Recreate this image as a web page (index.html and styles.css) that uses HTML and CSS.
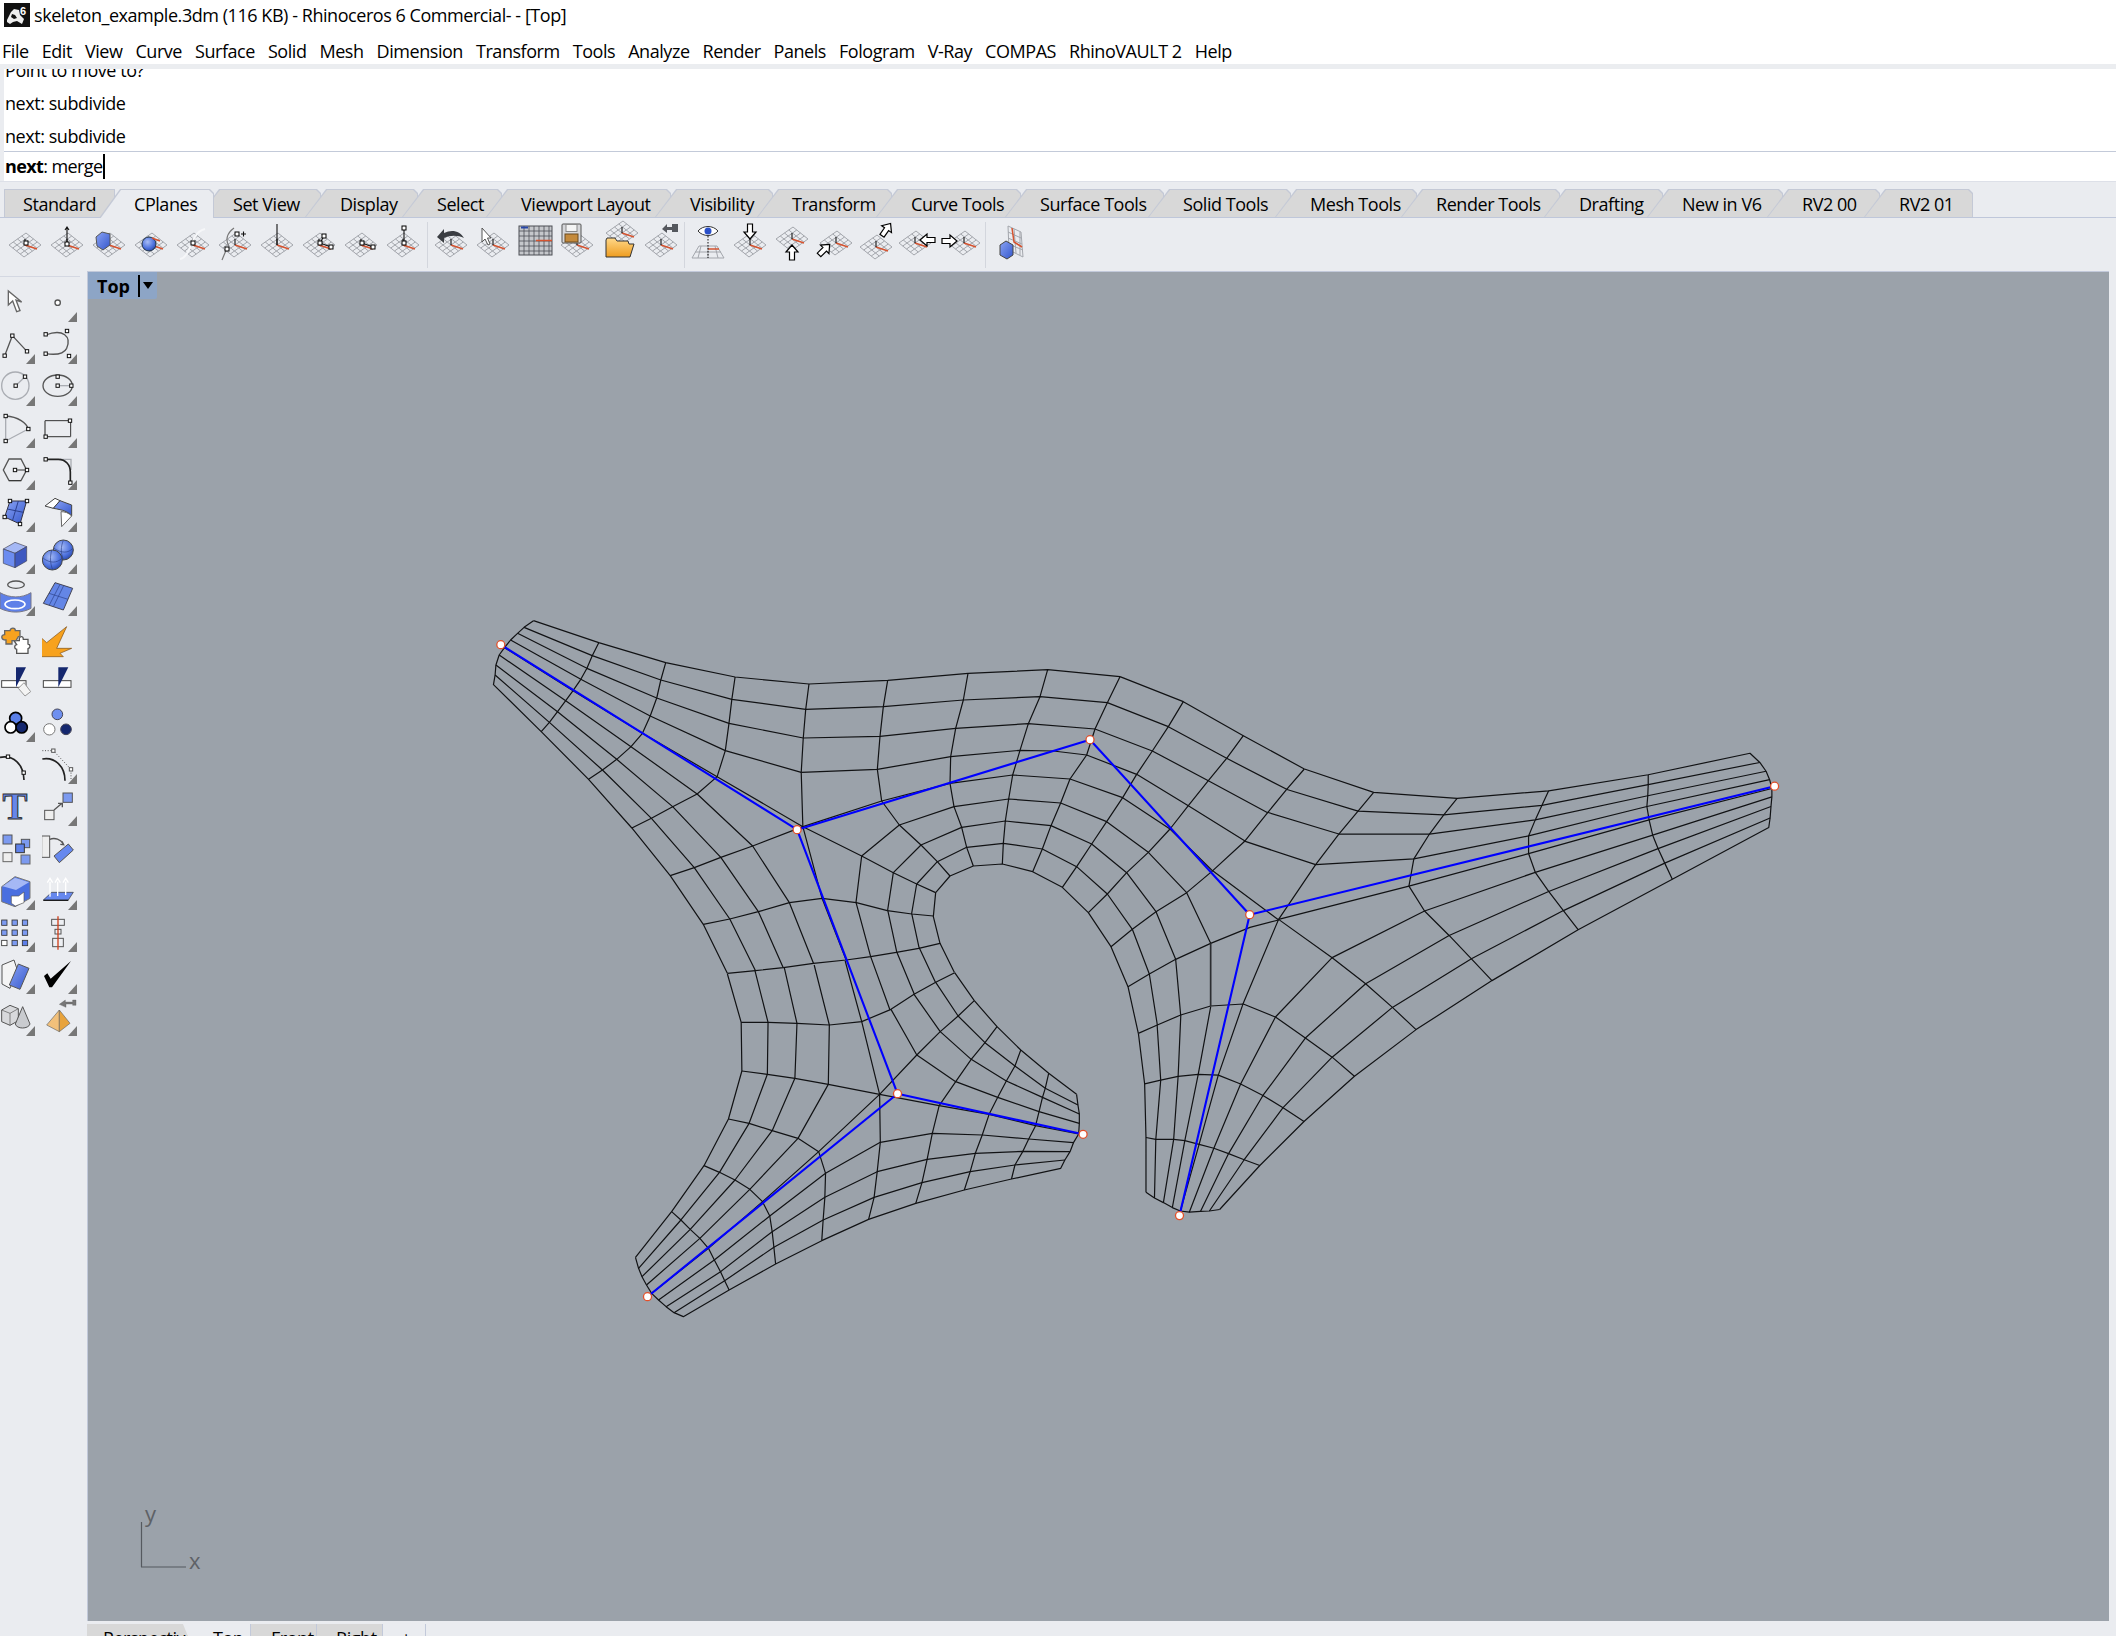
FILE: index.html
```html
<!DOCTYPE html>
<html lang="en">
<head>
<meta charset="utf-8">
<title>Rhinoceros 6</title>
<link rel="stylesheet" href="styles.css">
</head>
<body>
<svg class="defs" aria-hidden="true">
  <defs>
    <symbol id="cg" viewBox="0 0 32 26" overflow="visible">
      <path class="gl" d="M0 13 15 25M4.25 10 19.25 22M8.5 7 23.5 19M12.75 4 27.75 16M17 1 32 13M0 13 17 1M3.75 16 20.75 4M7.5 19 24.5 7M11.25 22 28.25 10M15 25 32 13"/>
      <path class="red" d="M16 13 28 17"/>
      <path class="ax" d="M16 7V13"/>
    </symbol>
    <symbol id="ar" viewBox="-7 -9 14 18" overflow="visible">
      <path class="arw" d="M0-8 6-1H2.5V7H-2.500V-1H-6Z"/>
    </symbol>
    <linearGradient id="fold" x1="0" y1="0" x2="0" y2="1"><stop offset="0" stop-color="#ffd889"/><stop offset="1" stop-color="#ee9c1f"/></linearGradient>
    <linearGradient id="blu" x1="0" y1="0" x2="1" y2="1"><stop offset="0" stop-color="#8aa3f4"/><stop offset="1" stop-color="#3457cc"/></linearGradient>
    <radialGradient id="sph" cx=".4" cy=".35" r=".75"><stop offset="0" stop-color="#a9bdf5"/><stop offset=".6" stop-color="#4e72de"/><stop offset="1" stop-color="#23409c"/></radialGradient>
  </defs>
</svg>

<div class="app">
  <header class="titlebar">
    <svg class="logo" viewBox="0 0 26 24"><rect width="26" height="24" fill="#111"/><path fill="#eee" d="M3 17 7 9l3-3 5 1 1 5 4 4-2 5-5-3-4 1-3 2-3-2Z"/><path fill="#111" d="M8 11l3 1 2 3-3 1-3-2Z"/><text class="six" x="16" y="12">6</text></svg>
    <span>skeleton_example.3dm (116 KB) - Rhinoceros 6 Commercial- - [Top]</span>
  </header>
  <nav class="menubar">
    <span>File</span><span>Edit</span><span>View</span><span>Curve</span><span>Surface</span><span>Solid</span><span>Mesh</span><span>Dimension</span><span>Transform</span><span>Tools</span><span>Analyze</span><span>Render</span><span>Panels</span><span>Fologram</span><span>V-Ray</span><span>COMPAS</span><span>RhinoVAULT 2</span><span>Help</span>
  </nav>
  <section class="command">
    <div class="history">
      <div class="hline">Point to move to?</div>
      <div class="hline">next: subdivide</div>
      <div class="hline">next: subdivide</div>
    </div>
    <div class="prompt"><b>next</b>: merge<i class="caret"></i></div>
  </section>

  <div class="tabs">
    <div class="tab first"><span>Standard</span></div>
    <div class="tab active"><span>CPlanes</span></div>
    <div class="tab"><span>Set View</span></div>
    <div class="tab"><span>Display</span></div>
    <div class="tab"><span>Select</span></div>
    <div class="tab"><span>Viewport Layout</span></div>
    <div class="tab"><span>Visibility</span></div>
    <div class="tab"><span>Transform</span></div>
    <div class="tab"><span>Curve Tools</span></div>
    <div class="tab"><span>Surface Tools</span></div>
    <div class="tab"><span>Solid Tools</span></div>
    <div class="tab"><span>Mesh Tools</span></div>
    <div class="tab"><span>Render Tools</span></div>
    <div class="tab"><span>Drafting</span></div>
    <div class="tab"><span>New in V6</span></div>
    <div class="tab"><span>RV2 00</span></div>
    <div class="tab last"><span>RV2 01</span></div>
  </div>

  <div class="toolbar">
    <svg class="ti" viewBox="0 0 42 50"><use href="#cg" x="5" y="12" width="32" height="26"/><rect class="sq" x="20" y="21" width="4" height="4"/></svg>
    <svg class="ti" viewBox="0 0 42 50"><use href="#cg" x="5" y="12" width="32" height="26"/><path class="bk" d="M21 8V24M19 10l2-3 2 3"/><rect class="sq" x="19" y="22" width="4" height="4"/></svg>
    <svg class="ti" viewBox="0 0 42 50"><use href="#cg" x="5" y="12" width="32" height="26"/><path fill="url(#blu)" stroke="#555" d="M8 17 14 12 22 14V25L15 30 9 26Z"/></svg>
    <svg class="ti" viewBox="0 0 42 50"><use href="#cg" x="5" y="12" width="32" height="26"/><circle cx="19" cy="24" r="7" fill="url(#sph)" stroke="#234"/><path class="rd2" d="M22 18 30 21"/></svg>
    <svg class="ti" viewBox="0 0 42 50"><use href="#cg" x="5" y="12" width="32" height="26"/><path class="wh" d="M8 39C16 38 18 24 23 17 25 13 29 10 33 9"/><rect class="sq" x="19" y="21" width="4" height="4"/></svg>
    <svg class="ti" viewBox="0 0 42 50"><use href="#cg" x="5" y="12" width="32" height="26"/><path class="gy" d="M8 40 13 28M20 8C13 13 11 20 15 26"/><rect class="sq" x="11" y="27" width="4" height="4"/><rect class="sq" x="21" y="12" width="4" height="4"/><path class="bk" d="M27 14h5M29.500 11.500v5"/></svg>
    <svg class="ti" viewBox="0 0 42 50"><use href="#cg" x="5" y="12" width="32" height="26"/><path class="bk" d="M21 4V25"/></svg>
    <svg class="ti" viewBox="0 0 42 50"><use href="#cg" x="5" y="12" width="32" height="26"/><path class="bk" d="M22 23 26 16M22 23 33 27"/><rect class="sq" x="20" y="21" width="4" height="4"/><rect class="sq" x="24" y="14" width="4" height="4"/><rect class="sq" x="31" y="25" width="4" height="4"/></svg>
    <svg class="ti" viewBox="0 0 42 50"><use href="#cg" x="5" y="12" width="32" height="26"/><path class="bk" d="M22 23 33 27"/><rect class="sq" x="20" y="21" width="4" height="4"/><rect class="sq" x="31" y="25" width="4" height="4"/></svg>
    <svg class="ti" viewBox="0 0 42 50"><use href="#cg" x="5" y="12" width="32" height="26"/><path class="bk" d="M22 8V23"/><rect class="sq" x="20" y="6" width="4" height="4"/><rect class="sq" x="20" y="21" width="4" height="4"/></svg>
    <i class="tsep s6"></i>
    <svg class="ti" viewBox="0 0 42 50"><use href="#cg" x="5" y="12" width="32" height="26"/><path fill="#3a3d42" d="M7 17 14 9V13C22 9 30 11 34 18 28 15 20 15 14 18V23Z"/></svg>
    <svg class="ti" viewBox="0 0 42 50"><use href="#cg" x="5" y="12" width="32" height="26"/><path fill="#fff" stroke="#555" d="M10 8V22L13 19 16 25 18 24 15.500 18H19Z"/></svg>
    <svg class="ti" viewBox="0 0 42 50"><rect x="5" y="6" width="33" height="29" fill="#c5c7cb" stroke="#4c4f55"/><path class="gd" d="M10 6V35M15 6V35M20 6V35M25 6V35M30 6V35M35 6V35M5 11H38M5 16H38M5 21H38M5 26H38M5 31H38"/><path class="rd2" d="M22 20.500H38"/><path stroke="#2746a8" stroke-width="2" d="M7 7.500H14"/></svg>
    <svg class="ti" viewBox="0 0 42 50"><use href="#cg" x="5" y="12" width="32" height="26"/><rect x="6" y="4" width="19" height="19" rx="1" fill="#d6d7da" stroke="#555"/><rect x="10" y="4.500" width="11" height="7" fill="#f4f4f4" stroke="#888"/><rect x="9" y="14" width="13" height="8" fill="#c48a3c" stroke="#6b4a1f"/></svg>
    <svg class="ti" viewBox="0 0 42 50"><use href="#cg" x="8" y="0" width="32" height="26"/><path fill="url(#fold)" stroke="#333" d="M8 37V20L9 18H17L19 21H30L31 24H36L32 37Z"/></svg>
    <svg class="ti" viewBox="0 0 42 50"><use href="#cg" x="5" y="12" width="32" height="26"/><path fill="#55585e" d="M22 9 27 4V7H32V4H38V12H32V10H27V13Z"/></svg>
    <i class="tsep s5"></i>
    <svg class="ti" viewBox="0 0 42 50"><path class="gl" d="M12 26H30L37 38H5ZM8 32H34M14 26 11 38M21 26V38M28 26 31 38"/><path class="rd2" d="M21 29H32"/><path class="dot" d="M21 16V38"/><path fill="#fff" stroke="#333" d="M11 11C16 5 26 5 31 11 26 17 16 17 11 11Z"/><circle cx="21" cy="11" r="3.500" fill="#2b50c8"/></svg>
    <svg class="ti" viewBox="0 0 42 50"><use href="#cg" x="5" y="12" width="32" height="26"/><use href="#ar" width="14" height="18" transform="translate(21 11) rotate(180) translate(-7 -9)"/></svg>
    <svg class="ti" viewBox="0 0 42 50"><use href="#cg" x="5" y="6" width="32" height="26"/><use href="#ar" width="14" height="18" transform="translate(21 33) translate(-7 -9)"/></svg>
    <svg class="ti" viewBox="0 0 42 50"><use href="#cg" x="7" y="10" width="32" height="26"/><use href="#ar" width="14" height="18" transform="translate(11 30) rotate(45) translate(-7 -9)"/></svg>
    <svg class="ti" viewBox="0 0 42 50"><use href="#cg" x="5" y="14" width="32" height="26"/><use href="#ar" width="14" height="18" transform="translate(31 10) rotate(35) translate(-7 -9)"/></svg>
    <svg class="ti" viewBox="0 0 42 50"><use href="#cg" x="2" y="10" width="32" height="26"/><use href="#ar" width="14" height="18" transform="translate(31 20) rotate(-90) translate(-7 -9)"/></svg>
    <svg class="ti" viewBox="0 0 42 50"><use href="#cg" x="9" y="10" width="32" height="26"/><use href="#ar" width="14" height="18" transform="translate(10 21) rotate(90) translate(-7 -9)"/></svg>
    <i class="tsep s9"></i>
    <svg class="ti" viewBox="0 0 42 50"><path class="gl" d="M18 6 31 12 33 37 19 30ZM24 9 26 33M30 12V35M18 12 31 18M18 18 32 24M18 24 33 30"/><path class="rd2" d="M22 8 24 22 32 27"/><path fill="url(#blu)" stroke="#444" d="M10 25 16 21 23 25 23 35 17 39 10 35Z"/></svg>
  </div>

  <div class="workspace">
    <aside class="lefttools">
      <div class="grip"></div>
      <div class="lgrid">
        <div class="lc"><svg viewBox="0 33 126 126"><path fill="#fff" stroke="#666" stroke-width="4" d="M25 63V105L38 93 50 125 60 122 48 90 65 96Z"/></svg></div>
        <div class="lc fly"><svg viewBox="126 33 126 126"><circle cx="173" cy="98" r="8" fill="#fff" stroke="#555" stroke-width="4"/></svg></div>

        <div class="lc fly"><svg viewBox="0 159 126 126"><path class="li" d="M14 257 37 197 81 244"/><rect class="s3" x="9" y="252" width="10" height="10"/><rect class="s3" x="32" y="192" width="10" height="10"/><rect class="s3" x="76" y="239" width="10" height="10"/></svg></div>
        <div class="lc fly"><svg viewBox="126 159 126 126"><path class="li" d="M137 195C190 175 215 200 200 235 190 255 165 255 137 251"/><rect class="s3" x="132" y="188" width="10" height="10"/><rect class="s3" x="196" y="178" width="10" height="10"/><rect class="s3" x="132" y="246" width="10" height="10"/><rect class="s3" x="202" y="253" width="10" height="10"/></svg></div>

        <div class="lc fly"><svg viewBox="0 285 126 126"><circle class="li2" cx="46" cy="347" r="41"/><path class="li2" d="M47 347 75 320"/><rect class="s3" x="42" y="342" width="10" height="10"/><rect class="s3" x="70" y="315" width="10" height="10"/></svg></div>
        <div class="lc fly"><svg viewBox="126 285 126 126"><ellipse class="li" cx="173" cy="347" rx="44" ry="32"/><path class="li2" d="M173 347H214"/><rect class="s3" x="168" y="315" width="10" height="10"/><rect class="s3" x="168" y="342" width="10" height="10"/><rect class="s3" x="209" y="342" width="10" height="10"/></svg></div>

        <div class="lc fly"><svg viewBox="0 411 126 126"><path class="li2" d="M17 438V513L85 477"/><path class="li" d="M17 438C55 440 80 460 85 477"/><rect class="s3" x="12" y="433" width="10" height="10"/><rect class="s3" x="80" y="472" width="10" height="10"/><rect class="s3" x="12" y="508" width="10" height="10"/></svg></div>
        <div class="lc fly"><svg viewBox="126 411 126 126"><path class="li3" d="M135 452H212V500"/><path class="li" d="M212 500H135V452"/><rect class="s3" x="205" y="447" width="10" height="10"/><rect class="s3" x="132" y="495" width="10" height="10"/></svg></div>

        <div class="lc fly"><svg viewBox="0 537 126 126"><path class="li" d="M27 567H63L80 600 63 632H27L10 600Z"/><path class="li3" d="M27 632H63M45 600H80"/><rect class="s3" x="40" y="595" width="10" height="10"/><rect class="s3" x="76" y="595" width="10" height="10"/></svg></div>
        <div class="lc fly"><svg viewBox="126 537 126 126"><path class="li2" d="M180 568H213V600"/><path class="li4" d="M137 568H175C197 568 211 585 211 606V638"/><rect class="s3" x="132" y="563" width="10" height="10"/><rect class="s3" x="206" y="633" width="10" height="10"/></svg></div>

        <div class="lc fly"><svg viewBox="0 663 126 126"><path fill="url(#blu)" stroke="#334" stroke-width="3" d="M30 693H80L60 762 14 741Z"/><path stroke="#2b3f8c" stroke-width="3" fill="none" d="M55 693 38 750M22 717 70 727"/><rect class="s3" x="25" y="688" width="10" height="10"/><rect class="s3" x="76" y="688" width="10" height="10"/><rect class="s3" x="55" y="757" width="10" height="10"/><rect class="s3" x="9" y="736" width="10" height="10"/></svg></div>
        <div class="lc fly"><svg viewBox="126 663 126 126"><path fill="#fff" stroke="#444" stroke-width="3" d="M135 708 165 685 180 692 160 715Z"/><path fill="url(#blu)" stroke="#444" stroke-width="3" d="M160 715 180 692 215 705V738C205 725 190 720 160 715Z"/><path fill="#fff" stroke="#666" stroke-width="3" d="M183 725 185 770 215 738C205 728 195 725 183 725Z"/></svg></div>

        <div class="lc fly"><svg viewBox="0 789 126 126"><path fill="#a5b8f5" stroke="#445" stroke-width="2" d="M10 837 45 817 80 830 45 850Z"/><path fill="#6c8cf0" stroke="#445" stroke-width="2" d="M10 837 45 850V893L10 880Z"/><path fill="#3e58c0" stroke="#445" stroke-width="2" d="M45 850 80 830V873L45 893Z"/></svg></div>
        <div class="lc fly"><svg viewBox="126 789 126 126"><circle cx="190" cy="840" r="30" fill="url(#sph)" stroke="#444" stroke-width="3"/><circle cx="157" cy="870" r="30" fill="url(#sph)" stroke="#444" stroke-width="3"/><path fill="none" stroke="#2a3f88" stroke-width="2" d="M162 835C185 850 205 850 218 835M190 811C182 830 182 850 190 868M130 865C150 880 170 880 186 865M155 840C150 860 150 880 158 899"/></svg></div>

        <div class="lc fly"><svg viewBox="0 915 126 126"><ellipse class="li" cx="48" cy="944" rx="25" ry="11"/><path fill="#5e80e8" stroke="#778" stroke-width="3" d="M0 968C30 985 65 985 93 968V1015C65 1030 30 1030 0 1015Z"/><ellipse cx="45" cy="1003" rx="30" ry="13" fill="none" stroke="#fff" stroke-width="5"/></svg></div>
        <div class="lc fly"><svg viewBox="126 915 126 126"><path fill="#6486e6" stroke="#445" stroke-width="3" d="M165 938 218 955 190 1020 130 1000Z"/><path fill="none" stroke="#2a3f88" stroke-width="2" d="M191 947 160 1010M147 970 204 988M180 943 148 1005"/></svg></div>

        <div class="lc"><svg viewBox="0 1041 126 126"><path fill="#fff" stroke="#555" stroke-width="4" d="M42 1112H58V1104C62 1098 70 1098 70 1108H84V1122C92 1124 92 1134 84 1136V1150H50V1138C42 1136 42 1126 50 1124Z"/><path fill="#f7a21e" stroke="#666" stroke-width="4" d="M14 1082H30C32 1072 46 1072 46 1082H60V1098C52 1098 52 1108 48 1112H36V1122H18V1110C2 1110 2 1094 14 1094Z"/></svg></div>
        <div class="lc"><svg viewBox="126 1041 126 126"><path fill="#f7a21e" stroke="#7a4a10" stroke-width="2" d="M120 1160V1100L140 1118 200 1070 170 1135H215L180 1150 190 1160Z"/></svg></div>

        <div class="lc"><svg viewBox="0 -3 126 126"><rect x="5" y="62" width="73" height="20" fill="#fff" stroke="#444" stroke-width="3"/><path fill="#14276e" d="M48 22H78L48 82Z"/><path fill="#f4f4f4" stroke="#999" stroke-width="3" d="M55 85 72 68 92 95 75 108Z"/></svg></div>
        <div class="lc"><svg viewBox="126 -3 126 126"><rect x="130" y="62" width="83" height="20" fill="#fff" stroke="#444" stroke-width="3"/><path fill="#14276e" d="M175 22H205L175 82Z"/></svg></div>

        <div class="lc fly"><svg viewBox="0 123 126 126"><circle cx="47" cy="175" r="18" fill="#5a7fe8" stroke="#000" stroke-width="5"/><circle cx="32" cy="202" r="17" fill="#fff" stroke="#000" stroke-width="5"/><circle cx="65" cy="202" r="17" fill="#14276e" stroke="#000" stroke-width="5"/></svg></div>
        <div class="lc"><svg viewBox="126 123 126 126"><circle cx="172" cy="163" r="16" fill="#6e8fef" stroke="#445" stroke-width="3"/><circle cx="148" cy="208" r="17" fill="#fff" stroke="#777" stroke-width="3"/><circle cx="198" cy="208" r="16" fill="#14276e" stroke="#445" stroke-width="3"/></svg></div>

        <div class="lc"><svg viewBox="0 249 126 126"><path class="li4b" d="M0 292C40 285 70 310 72 360"/><rect class="s3" x="19" y="285" width="10" height="10"/><rect class="s3" x="66" y="333" width="10" height="10"/></svg></div>
        <div class="lc fly"><svg viewBox="126 249 126 126"><path class="li4b" d="M127 297C165 290 195 320 195 362"/><path class="dot3" d="M127 272H160L213 328V360"/><rect class="s3g" x="155" y="267" width="10" height="10"/><rect class="s3g" x="208" y="323" width="10" height="10"/></svg></div>

        <div class="lc"><svg viewBox="0 375 126 126"><text class="bigt" x="45" y="478">T</text></svg></div>
        <div class="lc fly"><svg viewBox="126 375 126 126"><rect x="134" y="451" width="28" height="28" fill="#eee" stroke="#555" stroke-width="3"/><rect x="189" y="399" width="28" height="28" fill="#7c9af0" stroke="#555" stroke-width="3"/><path class="li" d="M162 450 186 430M174 430H187V442"/></svg></div>

        <div class="lc"><svg viewBox="0 501 126 126"><rect x="9" y="525" width="27" height="27" fill="#7c9af0" stroke="#555" stroke-width="3"/><rect x="64" y="538" width="25" height="25" fill="#7c9af0" stroke="#555" stroke-width="3"/><rect x="47" y="552" width="26" height="26" fill="#5f82ea" stroke="#333" stroke-width="3"/><rect x="9" y="578" width="27" height="27" fill="#eee" stroke="#666" stroke-width="3"/><rect x="63" y="585" width="27" height="27" fill="#7c9af0" stroke="#666" stroke-width="3"/></svg></div>
        <div class="lc"><svg viewBox="126 501 126 126"><rect x="125" y="528" width="24" height="64" fill="#eee" stroke="#555" stroke-width="3"/><path fill="#6688ee" stroke="#555" stroke-width="3" d="M162 588 205 552 220 570 178 608Z"/><path class="li" d="M149 538C165 532 182 538 190 552M186 544 191 554 181 553"/></svg></div>

        <div class="lc fly"><svg viewBox="0 627 126 126"><path fill="#4a6fe0" stroke="#777" stroke-width="3" d="M5 680 45 650 90 665V715L45 740 5 725Z"/><path fill="#a5b8f5" d="M8 679 45 653 87 667 48 690Z"/><path fill="#fff" stroke="#555" stroke-width="2" d="M34 708H56L72 696V728L46 738 34 730Z"/></svg></div>
        <div class="lc fly"><svg viewBox="126 627 126 126"><path fill="#6688ee" stroke="#333" stroke-width="2" d="M130 720 155 697H220L205 720Z"/><path stroke="#000" stroke-width="3" d="M130 721H205"/><path class="up" d="M150 710V665M142 668 150 655 158 668M173 708V665M165 668 173 655 181 668M197 705V665M189 668 197 655 205 668"/></svg></div>

        <div class="lc fly"><svg viewBox="0 753 126 126"><g stroke="#333" stroke-width="2.500"><rect x="5" y="780" width="16" height="16" fill="#7c9af0"/><rect x="36" y="780" width="16" height="16" fill="#7c9af0"/><rect x="67" y="780" width="16" height="16" fill="#7c9af0"/><rect x="5" y="810" width="16" height="16" fill="#7c9af0"/><rect x="36" y="810" width="16" height="16" fill="#7c9af0"/><rect x="67" y="810" width="16" height="16" fill="#7c9af0"/><rect x="5" y="841" width="16" height="16" fill="#fff"/><rect x="36" y="841" width="16" height="16" fill="#7c9af0"/><rect x="67" y="841" width="16" height="16" fill="#5c7ee8"/></g></svg></div>
        <div class="lc fly"><svg viewBox="126 753 126 126"><g fill="#eef0f4" stroke="#555" stroke-width="3"><rect x="155" y="778" width="38" height="18"/><rect x="165" y="808" width="18" height="14"/><rect x="158" y="835" width="32" height="25"/></g><path stroke="#d0401c" stroke-width="4" d="M174 769V869"/></svg></div>

        <div class="lc fly"><svg viewBox="0 879 126 126"><path fill="#f4f4f4" stroke="#555" stroke-width="3" d="M6 915 42 900 52 930 30 985 6 972Z"/><path fill="url(#blu)" stroke="#555" stroke-width="3" d="M55 912 87 925 60 988 28 975Z"/></svg></div>
        <div class="lc fly"><svg viewBox="126 879 126 126"><path fill="#000" d="M132 948 142 940 152 956 213 903 156 982 148 982Z"/></svg></div>

        <div class="lc fly"><svg viewBox="0 1005 126 126"><path fill="#d8d9dc" stroke="#555" stroke-width="3" d="M5 1050 30 1036 55 1046V1082L30 1096 5 1085Z"/><path fill="none" stroke="#555" stroke-width="2" d="M5 1050 30 1060 55 1046M30 1060V1096"/><path fill="#c9cbcf" stroke="#555" stroke-width="3" d="M68 1040 90 1092C85 1108 50 1108 46 1092Z"/></svg></div>
        <div class="lc fly"><svg viewBox="126 1005 126 126"><path fill="#f2c07a" stroke="#666" stroke-width="2" d="M178 1050 140 1095 178 1115Z"/><path fill="#e8a33c" stroke="#666" stroke-width="2" d="M178 1050 210 1090 178 1115Z"/><path fill="#777" stroke="#555" d="M178 1033 196 1020V1026H218V1020H228V1036H218V1032H198V1042Z"/></svg></div>
      </div>
    </aside>

    <div class="viewcol">
      <main class="viewport">
        <svg class="mesh" viewBox="87 271 2022 1350">
          <g transform="translate(480 600) scale(.40816 .33333)">
            <path class="m" d="M131 62 291 128 455 188 625 231 806 252 999 241 1196 220 1391 209 1568 230"/>
            <path class="m" d="M131 62 108 82 92 100 75 120 60 143 47 165 39 195 37 225 33 254 150 395 266 538 372 684 466 827 547 973 606 1120"/>
            <path class="m" d="M108 82 275 167 443 240 617 298 798 328M92 100 262 205 433 294 610 370 792 414M75 120 247 238 417 348 601 452 787 517M60 143 228 272 398 400 581 530 791 680"/>
            <path class="m" d="M47 165 210 302 370 440 532 582 668 738 758 908 817 1090M39 195 190 335 335 478 472 620 590 772 682 935 743 1103M37 225 170 367 300 510 420 655 525 803 612 957 675 1112"/>
            <path class="m" d="M291 128 275 167 262 205 247 238 228 272 210 302 190 335 170 367 150 395M455 188 443 240 433 294 417 348 398 400 370 440 335 478 300 510 266 538M625 231 617 298 610 370 601 452 581 530 532 582 472 620 420 655 372 684"/>
            <path class="m" d="M806 252 798 328 792 414 787 517 791 680 668 738 590 772 525 803 466 827"/>
            <path class="m" d="M547 973 612 957 682 935 758 908 838 895 922 908 998 932 1058 942 1111 948M606 1120 675 1112 743 1103 817 1090 897 1080 957 1070 1020 1057 1075 1045 1127 1030M791 680 838 895 897 1080"/>
          </g>
          <g transform="translate(820 690) scale(.33333)">
            <path class="m" d="M-43 58 190 50 430 30 660 20 862 38 1045 110 1220 205 1400 298M-50 144 180 139 407 115 625 101 825 117 997 183 1165 272 1343 368M-56 247 172 238 392 200 600 181 700 183 800 195 950 253 1105 347 1275 453"/>
            <path class="m" d="M-51 410 185 333 390 280 578 255 750 267 908 323 1050 417 1175 540 1376 690M-51 410 125 498 220 548 290 582 347 608"/>
            <path class="m" d="M238 405 402 350 566 327 722 339 860 395 985 487 1100 608 1172 760M303 465 425 412 556 393 693 407 815 462 920 548 1008 665 1067 808 1082 975M352 515 440 472 550 460 667 477 770 530 862 612 937 718 988 852 1012 1005"/>
            <path class="m" d="M347 608 390 558 460 528 547 522 638 545 727 592 805 668 873 770 924 890 955 1030M347 608 340 680 360 760 403 847"/>
            <path class="m" d="M203 -29 190 50 180 139 172 238 185 333 238 405 303 465 352 515 390 558M444 -50 430 30 407 115 392 200 390 280 402 350 425 412 440 472 460 528M683 -61 660 20 625 101 600 181 578 255 566 327 556 393 550 460 547 522M900 -40 862 38 825 117 800 195 750 267 722 339 693 407 667 477 638 545"/>
            <path class="m" d="M1090 35 1045 110 997 183 950 253 908 323 860 395 815 462 770 530 727 592M1270 137 1220 205 1165 272 1105 347 1050 417 985 487 920 548 862 612 805 668M1453 237 1400 298 1343 368 1275 453 1175 545 1100 608 1008 665 937 718 873 770"/>
            <path class="m" d="M900 -40 1090 35 1270 137 1453 237M924 890 988 852 1067 808 1172 760 1290 712 1376 690M955 1030 1012 1005 1082 975 1172 948 1270 942 1366 981"/>
            <path class="m2" d="M1172 760V948"/>
            <path class="m" d="M125 498 238 405M220 548 303 465M290 582 352 515M125 498 108 637 152 800 210 960M220 548 203 660 230 785 283 913M290 582 275 670 297 772 347 878"/>
          </g>
          <g transform="translate(600 960) scale(.34435 .33333)">
            <path class="m" d="M370 42 410 187 412 333 373 477 302 617 208 755 103 892M450 32 488 187 486 343 433 490 347 637 235 780 112 925M535 22 572 190 566 355 500 512 392 660 262 808 122 950M622 15 666 195 663 373 575 535 435 688 290 835 135 975M712 3 760 185 812 403 635 575 472 725 315 865 150 1000"/>
            <path class="m" d="M410 187 488 187 572 190 666 195 760 185 845 148 912 103 975 67 1030 38M412 333 486 343 566 355 663 373 812 403 985 437 1130 463 1265 497 1390 522M373 477 433 490 500 512 575 535 635 575 655 640 653 712 648 780 644 842M302 617 347 637 392 660 435 688 472 725 493 768 500 815 505 862 510 912M208 755 235 780 262 808 290 835 315 865 332 900 350 935 362 962 375 990"/>
            <path class="m" d="M103 892 112 925 122 950 135 975 150 1000 170 1020 192 1040 215 1058 242 1070 375 990 510 912 644 842 780 778 917 730 1058 690 1195 657 1338 625 1350 600 1365 575 1375 548 1390 522 1392 490 1392 462 1388 435 1384 403"/>
            <path class="m" d="M170 1020 332 900 493 768 655 640 814 547 965 520 1110 525 1245 537 1375 548M192 1040 350 935 500 815 653 712 805 635 950 598 1090 580 1228 574 1365 575M215 1058 362 962 505 862 648 780 796 712 935 668 1075 635 1205 615 1350 600"/>
            <path class="m" d="M812 403 814 547 805 635 796 712 780 778M985 437 965 520 950 598 935 668 917 730M1130 463 1110 525 1090 580 1075 635 1058 690M1265 497 1245 537 1228 574 1205 615 1195 657"/>
            <path class="m" d="M812 403 920 285 988 215 1040 168 1087 122M845 148 920 285 1033 365 1155 412 1275 455 1392 490M912 103 988 215 1078 298 1180 363 1285 412 1392 462M975 67 1040 168 1118 248 1205 318 1293 385 1388 435M1030 38 1087 122 1153 200 1222 270 1303 340 1384 403"/>
            <path class="m" d="M1153 200 1118 248 1078 298 1033 365 985 437M1222 270 1205 318 1180 363 1155 412 1130 463M1303 340 1293 385 1285 412 1275 455 1265 497"/>
          </g>
          <g transform="translate(1100 640) scale(.44643 .38272)">
            <path class="m" d="M458 337 613 398 800 414 1005 394 1228 352 1456 296 1478 320 1492 343 1500 365 1505 388 1505 410 1503 435 1501 465 1498 490 1282 625 1071 757 878 890 708 1018 570 1140 457 1258 358 1373 268 1488"/>
            <path class="m" d="M417 390 578 447 770 457 990 432 1228 378 1478 320M375 450 535 507 738 507 975 470 1227 407 1492 343M322 525 483 587 703 572 960 512 1225 435 1500 365M400 730 692 643 960 558 1230 470 1505 388M520 830 727 708 975 607 1238 510 1505 410M595 898 782 772 1005 657 1250 545 1503 435M655 960 832 833 1038 707 1265 583 1501 465"/>
            <path class="m" d="M613 398 578 447 535 507 483 587 400 730 320 952 265 1137 222 1318 180 1492M800 414 770 457 738 507 703 572 692 643 727 708 782 772 832 833 878 890M1005 394 990 432 975 470 960 512 960 558 975 607 1005 657 1038 707 1071 757M1228 352 1228 378 1227 407 1225 435 1230 470 1238 510 1250 545 1265 583 1282 625M400 730 520 830 595 898 655 960 708 1018"/>
            <path class="m" d="M520 830 393 985 315 1160 255 1328 200 1495M595 898 460 1040 365 1190 288 1342 225 1493M655 960 520 1090 410 1222 323 1358 245 1492M248 958 220 1135 190 1308 162 1483M181 980 175 1140 165 1305 142 1470M128 1006 136 1150 125 1305 122 1458M86 1028 100 1160 103 1300 103 1443"/>
            <path class="m" d="M100 1160 136 1150 175 1140 220 1135 265 1137 315 1160 365 1190 410 1222 457 1258M103 1300 125 1305 165 1305 190 1308 222 1318 255 1328 288 1342 323 1358 358 1373M393 985 460 1040 520 1090 570 1140M103 1443 122 1458 142 1470 162 1483 180 1492 200 1495 225 1493 245 1492 268 1488"/>
          </g>
          <path class="edge" d="M500.800 644.700 797.100 829.700 1090 739.700 1249.700 914.700 1774.600 786.200M1249.700 914.700 1179.500 1215.600M797.100 829.700 897.500 1093.700 1083.100 1134.300M897.500 1093.700 647.500 1296.700"/>
          <g class="nodes">
            <circle cx="500.800" cy="644.700" r="4"/><circle cx="797.100" cy="829.700" r="4"/><circle cx="1090" cy="739.700" r="4"/><circle cx="1249.700" cy="914.700" r="4"/><circle cx="897.500" cy="1093.700" r="4"/><circle cx="1083.100" cy="1134.300" r="4"/><circle cx="647.500" cy="1296.700" r="4"/><circle cx="1179.500" cy="1215.600" r="4"/><circle cx="1774.600" cy="786.200" r="4"/>
          </g>
          <path class="axis" d="M141.500 1522V1567H186"/>
          <text class="axt" x="145" y="1522">y</text>
          <text class="axt" x="189" y="1569">x</text>
        </svg>
        <div class="vplabel"><span class="vpname">Top</span><i class="vpdrop"></i></div>
      </main>
      <div class="vtabs">
        <div class="vt persp"><span>Perspective</span></div>
        <div class="vt vtop"><span>Top</span></div>
        <div class="vt front"><span>Front</span></div>
        <div class="vt right"><span>Right</span></div>
        <div class="vt plus"><span>+</span></div>
      </div>
    </div>
  </div>
</div>
</body>
</html>
```

FILE: styles.css
```css
* { box-sizing: border-box; }
html, body { margin: 0; padding: 0; }
body { width: 2116px; height: 1636px; overflow: hidden; background: #eaecf0; color: #000; font-family: "Open Sans", "Noto Sans", sans-serif; font-size: 18px; letter-spacing: -0.45px; }
.defs { position: absolute; width: 0; height: 0; }
.app { display: flex; flex-direction: column; width: 2116px; height: 1636px; overflow: hidden; }

.titlebar { display: flex; align-items: center; gap: 4px; height: 30px; padding-left: 4px; background: #fff; }
.logo { width: 26px; height: 24px; flex: none; }
.six { font: 700 11px "Liberation Sans", sans-serif; fill: #fff; letter-spacing: 0; }

.menubar { display: flex; gap: 13px; height: 34px; padding: 10px 0 0 2px; background: #fff; line-height: 23px; white-space: nowrap; }

.command { height: 117px; margin-top: 0; border-top: 5px solid #ebedf0; padding-left: 4px; background: #eaecf0; overflow: hidden; }
.history { height: 83px; background: #fff; overflow: hidden; border-bottom: 1px solid #c3cad9; }
.hline { height: 33px; line-height: 33px; padding-left: 1px; position: relative; top: -15.5px; }
.prompt { height: 29px; line-height: 29px; padding-left: 1px; background: #fff; display: flex; align-items: center; white-space: pre; letter-spacing: -0.6px; }
.prompt b { font-weight: 700; }
.caret { display: block; width: 2px; height: 25px; background: #000; margin-left: 0; }

.tabs { display: grid; grid-template-columns: 95px 99px 107px 97px 84px 169px 102px 119px 129px 143px 127px 126px 143px 103px 120px 97px 109px; height: 37px; padding: 7px 0 0 4px; border-top: 1px solid #dde0e8; border-bottom: 1px solid #bfc7da; background: #eaecf0; }
.tab { position: relative; height: 28px; margin-right: -16px; padding-left: 35px; line-height: 31px; white-space: nowrap; background: #c4c9d6; clip-path: polygon(0 100%, 21px 0, calc(100% - 4px) 0, 100% 4px, 100% 100%); }
.tab::before { content: ""; position: absolute; inset: 1px 1px 0 1px; background: #d8d8d8; clip-path: polygon(0 100%, 21px 0, calc(100% - 4px) 0, 100% 4px, 100% 100%); }
.tab span { position: relative; }
.tab.first { padding-left: 19px; clip-path: none; }
.tab.first::before { clip-path: polygon(0 0, 100% 0, 100% 100%, 0 100%); }
.tab.active { z-index: 2; height: 29px; margin-right: -16px; }
.tab.active::before { background: #eaecf0; inset: 1px 1px -1px 1px; }
.tab.last { margin-right: 0; }

.toolbar { display: flex; align-items: flex-start; height: 53px; padding-left: 4px; background: #eaecf0; }
.ti { display: block; flex: none; width: 42px; height: 50px; margin-top: 2px; }
.tsep { display: block; flex: none; height: 46px; margin-top: 4px; background: linear-gradient(#d3d6dd, #d3d6dd) center / 1px 100% no-repeat; }
.s6 { width: 6px; }
.s5 { width: 5px; }
.s9 { width: 9px; }
.gl { fill: none; stroke: #a3a6ac; stroke-width: 1; }
.red, .rd2 { fill: none; stroke: #d5532f; stroke-width: 1.5; }
.ax, .bk { fill: none; stroke: #111; stroke-width: 1.1; }
.arw { fill: #fff; stroke: #000; stroke-width: 1.2; }
.sq { fill: #fff; stroke: #000; stroke-width: 1; }
.wh { fill: none; stroke: #f6f7f9; stroke-width: 2; }
.gy { fill: none; stroke: #777; stroke-width: 1.2; }
.gd { fill: none; stroke: #4c4f55; stroke-width: .8; }
.dot { fill: none; stroke: #111; stroke-width: 1; stroke-dasharray: 1.500 1.500; }

.workspace { display: flex; flex: 1; min-height: 0; }
.lefttools { flex: none; width: 87px; padding-top: 5px; }
.grip { width: 80px; height: 1px; margin-bottom: 4px; background: #d4d8e2; }
.lgrid { display: grid; grid-template-columns: 42px 42px; grid-auto-rows: 42px; }
.lc { position: relative; width: 42px; height: 42px; }
.lc svg { display: block; width: 42px; height: 42px; overflow: hidden; }
.fly::after { content: ""; position: absolute; right: 7px; bottom: 1px; width: 9px; height: 10px; background: #777; clip-path: polygon(100% 0, 100% 100%, 0 100%); }
.s3, .s3g { fill: #fff; stroke: #111; stroke-width: 3; }
.s3g { stroke: #555; }
.li { fill: none; stroke: #555; stroke-width: 4; }
.li2 { fill: none; stroke: #aaadb3; stroke-width: 4; }
.li3 { fill: none; stroke: #333; stroke-width: 3; }
.li4, .li4b { fill: none; stroke: #222; stroke-width: 5; }
.dot3 { fill: none; stroke: #555; stroke-width: 3; stroke-dasharray: 3 5; }
.up { fill: none; stroke: #fff; stroke-width: 4; }
.bigt { font: 700 112px "Liberation Serif", serif; fill: #6686ea; stroke: #333; stroke-width: 3; text-anchor: middle; letter-spacing: 0; }

.viewcol { display: flex; flex-direction: column; width: 2022px; }
.viewport { position: relative; height: 1350px; background: #9ba2aa; border-left: 1px solid #c2c9da; border-top: 1px solid #c2c9da; overflow: hidden; }
.mesh { position: absolute; left: -1px; top: -1px; width: 2022px; height: 1350px; }
.m, .m2, .edge, .axis { fill: none; vector-effect: non-scaling-stroke; stroke-linejoin: round; }
.m { stroke: #111214; stroke-width: 1.2; }
.m2 { stroke: #2b2d31; stroke-width: 1.7; }
.edge { stroke: #0000ff; stroke-width: 2.1; }
.nodes circle { fill: #fff; stroke: #e2502a; stroke-width: 1.3; }
.axis { stroke: #55595f; stroke-width: 1.2; }
.axt { font: 22px "Open Sans", sans-serif; fill: #5e6166; letter-spacing: 0; }

.vplabel { position: absolute; left: 0; top: 0; display: flex; align-items: center; width: 69px; height: 27px; background: #8da5c6; border-bottom-right-radius: 2px; font-weight: 700; letter-spacing: 0; }
.vpname { width: 52px; padding-left: 9px; border-right: 2px solid #000; height: 22px; line-height: 22px; }
.vpdrop { width: 0; height: 0; margin-left: 3px; border: 5px solid transparent; border-top: 7px solid #000; border-bottom: 0; }

.vtabs { display: flex; height: 12px; margin-top: 3px; overflow: hidden; }
.vt { height: 30px; padding-top: 4px; line-height: 20px; white-space: nowrap; }
.persp { width: 108px; padding-left: 16px; background: #d8d8d8; clip-path: polygon(0 0, 96px 0, 100% 100%, 0 100%); }
.vtop { width: 55px; padding-left: 18px; }
.front { width: 66px; padding-left: 20px; background: #d8d8d8; border-left: 1px solid #c2c9da; }
.right { width: 67px; padding-left: 19px; background: #d8d8d8; border-left: 1px solid #c2c9da; border-right: 1px solid #c2c9da; }
.plus { width: 43px; padding-left: 18px; border-right: 1px solid #c2c9da; }
```
